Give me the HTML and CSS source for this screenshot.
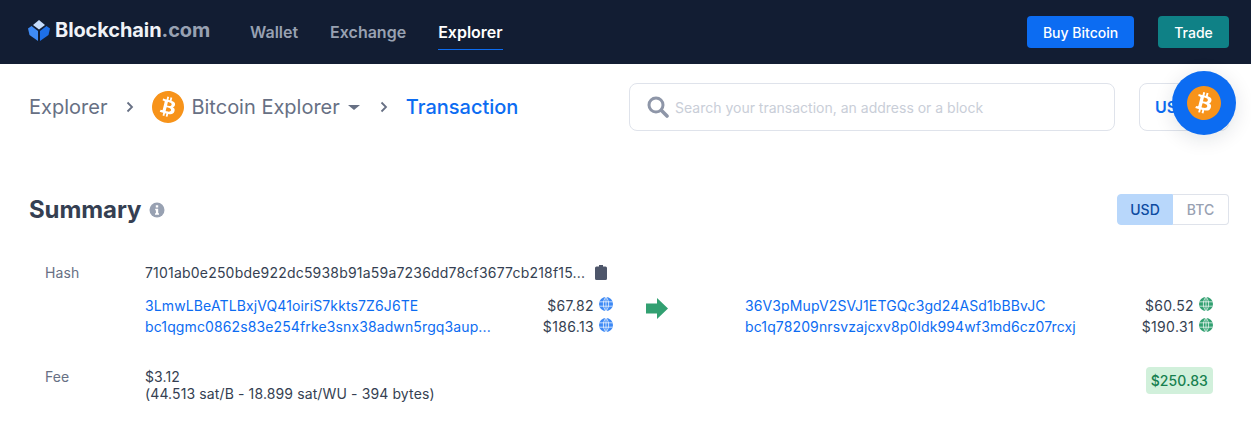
FILE: index.html
```html
<!DOCTYPE html>
<html lang="en">

<head>
  <meta charset="utf-8" />
  <title>Bitcoin Transaction</title>
  <link rel="stylesheet" href="styles.css">
</head>

<body>
  <svg class="defs" width="0" height="0">
    <symbol id="btc" viewBox="0 0 24 24">
      <path fill="#f7931a" d="M23.638 14.904c-1.602 6.43-8.113 10.34-14.542 8.736C2.67 22.05-1.244 15.525.362 9.105 1.962 2.67 8.475-1.243 14.9.358c6.43 1.605 10.342 8.115 8.738 14.548v-.002z"/>
      <path fill="#fff" d="M17.288 10.291c.24-1.59-.974-2.45-2.64-3.03l.54-2.153-1.315-.33-.525 2.107c-.345-.087-.705-.167-1.064-.25l.526-2.127-1.32-.33-.54 2.165c-.285-.067-.565-.132-.84-.2l-1.815-.45-.35 1.407s.975.225.955.236c.535.136.63.486.615.766l-1.477 5.92c-.075.166-.24.406-.614.314.015.02-.96-.24-.96-.24l-.66 1.51 1.71.426.93.242-.54 2.19 1.32.327.54-2.17c.36.1.705.19 1.05.273l-.51 2.154 1.32.33.545-2.19c2.24.427 3.93.257 4.64-1.774.57-1.637-.03-2.58-1.217-3.196.854-.193 1.5-.76 1.68-1.93h.01zm-3.01 4.22c-.404 1.64-3.157.75-4.05.53l.72-2.9c.896.23 3.757.67 3.33 2.37zm.41-4.24c-.37 1.49-2.662.735-3.405.55l.654-2.64c.744.18 3.137.524 2.75 2.084v.006z"/>
    </symbol>
    <symbol id="globe" viewBox="0 0 16 16">
      <circle cx="8" cy="8" r="8" fill="currentColor"/>
      <path fill="none" stroke="#fff" stroke-width="0.800" d="M.5 5.500h15M.5 10.500h15M8 0v16M8 0C4 4 4 12 8 16M8 0c4 4 4 12 0 16"/>
    </symbol>
    <symbol id="chevron" viewBox="0 0 10 12">
      <path fill="none" stroke="#677084" stroke-width="1.800" d="M2.500 1.500 7 6l-4.500 4.500"/>
    </symbol>
  </svg>

  <header class="topbar">
    <a class="logo">
      <svg class="logo-mark" viewBox="0 0 22 21">
        <path fill="#c5dcfb" d="M11 0l6 5-6 4.500L5 5z"/>
        <path fill="#3f8bf5" d="M3.500 6 10 11v10l-8.500-6L0 8.500z"/>
        <path fill="#1d6fe8" d="M18.500 6 12 11v10l8.500-6L22 8.500z"/>
      </svg>
      <span>Blockchain<em>.com</em></span>
    </a>
    <nav class="nav">
      <a>Wallet</a>
      <a>Exchange</a>
      <a class="active">Explorer</a>
    </nav>
    <div class="actions">
      <a class="btn btn-blue">Buy Bitcoin</a>
      <a class="btn btn-teal">Trade</a>
    </div>
  </header>

  <section class="crumbs">
    <span class="crumb">Explorer</span>
    <svg class="chev"><use href="#chevron"/></svg>
    <svg class="crumb-coin"><use href="#btc"/></svg>
    <span class="crumb">Bitcoin Explorer</span>
    <span class="caret"></span>
    <svg class="chev chev-2"><use href="#chevron"/></svg>
    <span class="crumb current">Transaction</span>
    <div class="search">
      <svg class="search-icon" viewBox="0 0 22 22">
        <circle cx="9" cy="9" r="7" fill="none" stroke="#8e96a8" stroke-width="3"/>
        <path stroke="#8e96a8" stroke-width="3.600" stroke-linecap="round" d="M14.500 14.500l5.500 5.500"/>
      </svg>
      <span>Search your transaction, an address or a block</span>
    </div>
    <div class="currency">USD</div>
  </section>

  <button class="float-coin"><svg><use href="#btc"/></svg></button>

  <section class="summary">
    <div class="summary-head">
      <h2>Summary</h2>
      <svg class="info" viewBox="0 0 16 16">
        <circle cx="8" cy="8" r="7.500" fill="#98a1b2"/>
        <path fill="#fff" d="M6.800 3.300h2.400v2.200H6.800zM6.200 6.800h3v4.400h.8v1.500H6v-1.500h.9V8.300h-.7z"/>
      </svg>
      <div class="toggle">
        <span class="on">USD</span>
        <span>BTC</span>
      </div>
    </div>

    <div class="row row-hash">
      <div class="label">Hash</div>
      <div class="hash">
        <span>7101ab0e250bde922dc5938b91a59a7236dd78cf3677cb218f15...</span>
        <svg class="clip" viewBox="0 0 12 15">
          <path fill="#4e566a" d="M4 0h4v1.500h2.500A1.500 1.500 0 0 1 12 3v10.500a1.500 1.500 0 0 1-1.500 1.500h-9A1.500 1.500 0 0 1 0 13.500V3a1.500 1.500 0 0 1 1.500-1.500H4z"/>
        </svg>
      </div>
    </div>

    <div class="io">
      <div class="io-side io-in">
        <div class="io-line">
          <a class="addr">3LmwLBeATLBxjVQ41oiriS7kkts7Z6J6TE</a>
          <span class="amt">$67.82</span>
          <svg class="globe blue"><use href="#globe"/></svg>
        </div>
        <div class="io-line">
          <a class="addr">bc1qgmc0862s83e254frke3snx38adwn5rgq3aup...</a>
          <span class="amt">$186.13</span>
          <svg class="globe blue"><use href="#globe"/></svg>
        </div>
      </div>
      <svg class="arrow" viewBox="0 0 22 21">
        <path fill="#32a071" d="M0 5.500h11V0l11 10.500L11 21v-5.500H0z"/>
      </svg>
      <div class="io-side io-out">
        <div class="io-line">
          <a class="addr">36V3pMupV2SVJ1ETGQc3gd24ASd1bBBvJC</a>
          <span class="amt">$60.52</span>
          <svg class="globe green"><use href="#globe"/></svg>
        </div>
        <div class="io-line">
          <a class="addr">bc1q78209nrsvzajcxv8p0ldk994wf3md6cz07rcxj</a>
          <span class="amt">$190.31</span>
          <svg class="globe green"><use href="#globe"/></svg>
        </div>
      </div>
    </div>

    <div class="row row-fee">
      <div class="label">Fee</div>
      <div class="fee">$3.12<br>(44.513 sat/B - 18.899 sat/WU - 394 bytes)</div>
      <div class="total">$250.83</div>
    </div>
  </section>
</body>

</html>
```

FILE: styles.css
```css
/*
  site colors:
    navy    #121d33
    blue    #0c6cf2
    teal    #0f8186
    grey    #677084
 */
* {
  box-sizing: border-box;
}

body {
  margin: 0;
  height: 423px;
  overflow: hidden;
  position: relative;
  background-color: #fff;
  font-family: Inter, "Liberation Sans", sans-serif;
  color: #353f52;
}

.defs {
  position: absolute;
}

.topbar {
  display: flex;
  align-items: center;
  height: 64px;
  padding: 0 22px 0 28px;
  background-color: #121d33;
}

.logo {
  display: flex;
  align-items: center;
  gap: 5px;
  width: 222px;
  margin-top: -4px;
  font-size: 20px;
  font-weight: 700;
  letter-spacing: -0.1px;
  color: #f0f2f7;
}

.logo em {
  font-style: normal;
  color: #98a1b2;
}

.logo-mark {
  width: 22px;
  height: 21px;
}

.nav {
  display: flex;
  gap: 32px;
  height: 64px;
  align-items: center;
  font-size: 16px;
  font-weight: 600;
  color: #98a1b2;
}

.nav a {
  display: block;
  padding: 7px 0 7px;
  margin-top: 0;
  border-bottom: 1px solid transparent;
}

.nav .active {
  color: #fff;
  border-bottom-color: #0c6cf2;
}

.actions {
  display: flex;
  gap: 24px;
  margin-left: auto;
}

.btn {
  display: flex;
  align-items: center;
  justify-content: center;
  height: 32px;
  border-radius: 4px;
  font-size: 14px;
  font-weight: 500;
  color: #fff;
}

.btn-blue {
  width: 107px;
  background-color: #0c6cf2;
}

.btn-teal {
  width: 71px;
  background-color: #0f8186;
}

.crumbs {
  display: flex;
  align-items: center;
  height: 48px;
  margin-top: 19px;
  padding: 0 22px 0 29px;
}

.crumb {
  font-size: 20px;
  color: #677084;
}

.crumb.current {
  font-weight: 500;
  color: #0c6cf2;
}

.chev {
  width: 10px;
  height: 12px;
  margin: 0 17px 0 18px;
}

.chev-2 {
  margin: 0 17px 0 19px;
}

.crumb-coin {
  width: 32px;
  height: 32px;
  margin-right: 7px;
}

.caret {
  width: 0;
  height: 0;
  margin-left: 8px;
  border-left: 6px solid transparent;
  border-right: 6px solid transparent;
  border-top: 5px solid #677084;
}

.search {
  display: flex;
  align-items: center;
  gap: 6px;
  width: 486px;
  height: 48px;
  margin-left: auto;
  padding-left: 17px;
  border: 1px solid #dfe3eb;
  border-radius: 8px;
  font-size: 14px;
  color: #c9ced8;
}

.search-icon {
  width: 22px;
  height: 22px;
}

.currency {
  width: 90px;
  height: 48px;
  margin-left: 24px;
  padding-left: 15px;
  border: 1px solid #dfe3eb;
  border-radius: 8px;
  font-size: 16px;
  font-weight: 600;
  line-height: 46px;
  color: #0c6cf2;
}

.float-coin {
  position: absolute;
  top: 71px;
  left: 1172px;
  display: flex;
  align-items: center;
  justify-content: center;
  width: 64px;
  height: 64px;
  padding: 0;
  border: none;
  border-radius: 50%;
  background-color: #0c6cf2;
  box-shadow: 0 4px 20px rgba(18, 29, 51, 0.12);
}

.float-coin svg {
  width: 34px;
  height: 34px;
}

.summary {
  padding: 0 22px 0 29px;
}

.summary-head {
  display: flex;
  align-items: center;
  height: 31px;
  margin-top: 63px;
}

.summary-head h2 {
  margin: 0;
  font-size: 24px;
  font-weight: 700;
  letter-spacing: -0.1px;
}

.info {
  width: 16px;
  height: 16px;
  margin-left: 8px;
}

.toggle {
  display: flex;
  margin-left: auto;
  font-size: 14px;
  font-weight: 500;
  color: #98a1b2;
}

.toggle span {
  width: 56px;
  height: 31px;
  line-height: 29px;
  text-align: center;
  border: 1px solid #dfe3eb;
  border-left: none;
  border-radius: 0 4px 4px 0;
}

.toggle .on {
  border: 1px solid #b8d7fb;
  border-radius: 4px 0 0 4px;
  background-color: #b8d7fb;
  color: #0d4aa0;
}

.row {
  display: flex;
  padding-left: 16px;
  padding-right: 16px;
  font-size: 14px;
  line-height: 17px;
  letter-spacing: 0.12px;
}

.row-hash {
  margin-top: 39px;
}

.label {
  width: 100px;
  color: #677084;
}

.hash {
  display: flex;
  align-items: center;
  gap: 10px;
  letter-spacing: 0.2px;
}

.clip {
  width: 12px;
  height: 15px;
}

.io {
  display: flex;
  align-items: flex-start;
  margin-top: 16px;
  padding-left: 116px;
  font-size: 14px;
  letter-spacing: 0.12px;
}

.io-side {
  display: flex;
  flex-direction: column;
  gap: 4px;
}

.io-in {
  width: 468px;
}

.io-out {
  width: 468px;
  margin-left: 77px;
}

.io-line {
  display: flex;
  align-items: center;
  height: 17px;
}

.addr {
  color: #0c6cf2;
}

.amt {
  margin-left: auto;
  margin-right: 5px;
  letter-spacing: 0.35px;
}

.globe {
  width: 14px;
  height: 14px;
  margin-top: -3px;
}

.globe.blue {
  color: #3d89f5;
}

.globe.green {
  color: #32a071;
}

.arrow {
  width: 22px;
  height: 21px;
  margin-left: 33px;
  margin-top: 1px;
}

.row-fee {
  margin-top: 33px;
  align-items: flex-start;
}

.fee {
  flex: 1;
}

.total {
  padding: 5px;
  margin-top: -1px;
  border-radius: 4px;
  background-color: #d1f0db;
  color: #17804f;
  font-weight: 500;
}
```
